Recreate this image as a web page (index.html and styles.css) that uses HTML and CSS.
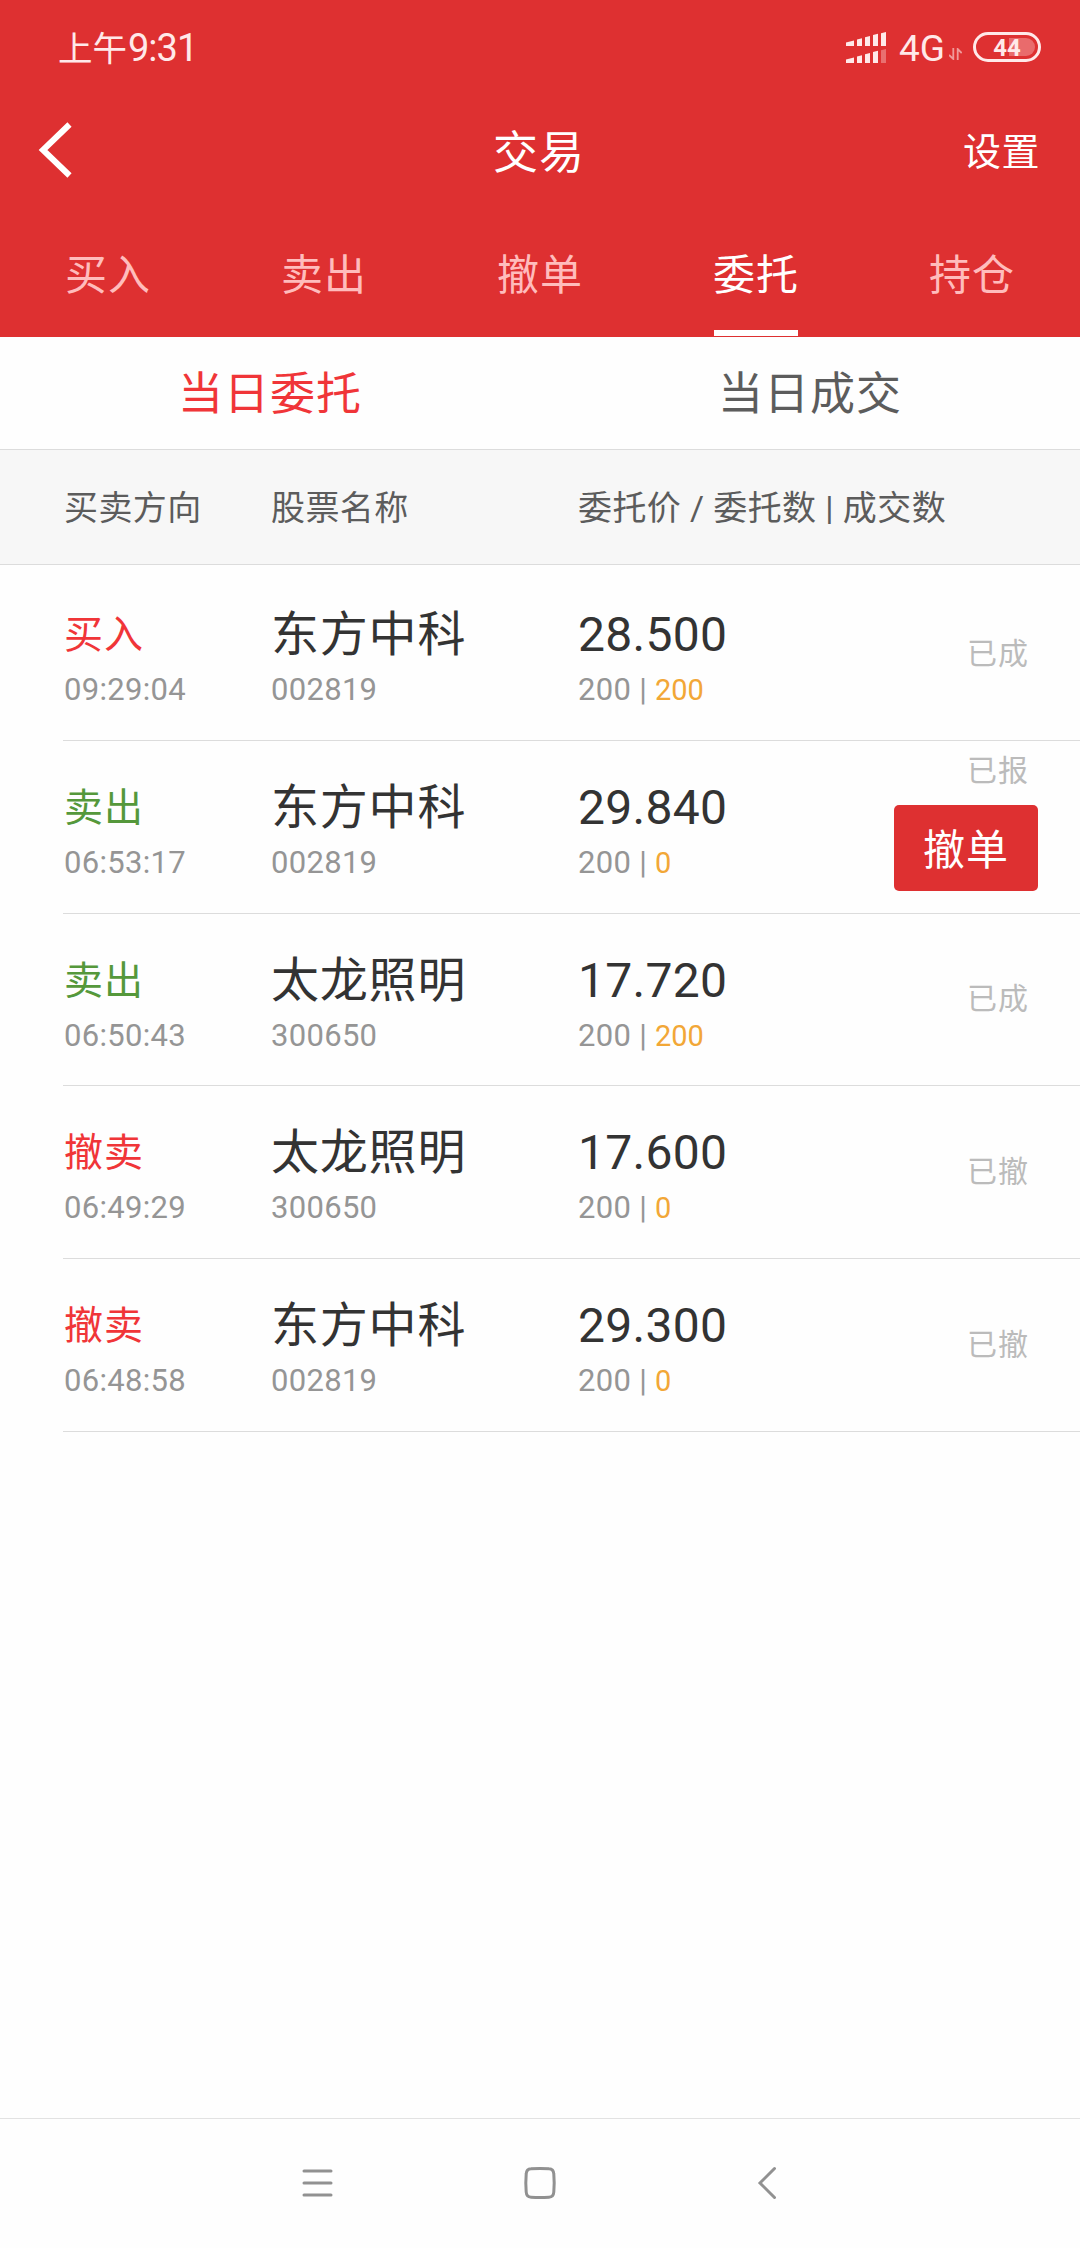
FILE: index.html
```html
<!DOCTYPE html>
<html lang="zh-CN">
<head>
    <meta charset="UTF-8">
    <meta name="viewport" content="width=device-width, initial-scale=1.0">
    <title>交易</title>
    <link rel="stylesheet" href="styles.css">
</head>
<body>
    <header class="header">
        <div class="status-bar">
            <div class="clock">上午<span class="clock-digits">9:31</span></div>
            <div class="status-icons">
                <svg class="signal" width="40" height="32" viewBox="0 0 40 32" fill="#ffe9e9">
                    <path d="M0 10.5l8-2V14H0zM11 7.5l5-1.3V14h-5zM19 5.2l5-1.3V14h-5zM27 3l5-1.3V14h-5zM35 1.2l5-1.2v14h-5z"/>
                    <path d="M0 27.5l8-2V31H0zM11 24.5l5-1.3V31h-5zM19 22.2l5-1.3V31h-5zM27 20l5-1.3V31h-5z"/>
                    <path d="M35 18.2l5-1.2v14h-5z" opacity="0.35"/>
                </svg>
                <span class="network">4G</span>
                <svg class="traffic" width="13" height="12" viewBox="0 0 13 12" fill="none" stroke="#f09a9a" stroke-width="1.8">
                    <path d="M4.3 0v11L0 7M8.7 12V1l4 4"/>
                </svg>
                <svg class="battery" width="68" height="30" viewBox="0 0 68 30">
                    <rect x="1.5" y="1.5" width="65" height="27" rx="13.5" fill="none" stroke="#ffe9e9" stroke-width="3"/>
                    <path d="M36 6h17a9 9 0 0 1 0 18H36z" fill="#e96b6c"/>
                    <text class="battery-level" x="34" y="24" text-anchor="middle">44</text>
                </svg>
            </div>
        </div>
        <div class="title-bar">
            <a class="back" href="#">
                <svg width="34" height="56" viewBox="0 0 34 56" fill="none" stroke="#fff" stroke-width="6">
                    <path d="M31.500 2.500L5 28l26.500 25.500"/>
                </svg>
            </a>
            <h1 class="title">交易</h1>
            <a class="settings" href="#">设置</a>
        </div>
        <nav class="tabs">
            <a class="tab" href="#"><span>买入</span></a>
            <a class="tab" href="#"><span>卖出</span></a>
            <a class="tab" href="#"><span>撤单</span></a>
            <a class="tab active" href="#"><span>委托</span></a>
            <a class="tab" href="#"><span>持仓</span></a>
        </nav>
    </header>

    <div class="sub-tabs">
        <a class="sub-tab active" href="#">当日委托</a>
        <a class="sub-tab" href="#">当日成交</a>
    </div>

    <div class="list-head">
        <span>买卖方向</span>
        <span>股票名称</span>
        <span>委托价 / 委托数 | 成交数</span>
    </div>

    <main class="orders">
        <div class="order">
            <div class="cell">
                <p class="side red">买入</p>
                <p class="sub">09:29:04</p>
            </div>
            <div class="cell">
                <p class="name">东方中科</p>
                <p class="sub">002819</p>
            </div>
            <div class="cell">
                <p class="price">28.500</p>
                <p class="sub">200 | <span class="filled">200</span></p>
            </div>
            <div class="state">已成</div>
        </div>
        <div class="order">
            <div class="cell">
                <p class="side green">卖出</p>
                <p class="sub">06:53:17</p>
            </div>
            <div class="cell">
                <p class="name">东方中科</p>
                <p class="sub">002819</p>
            </div>
            <div class="cell">
                <p class="price">29.840</p>
                <p class="sub">200 | <span class="filled">0</span></p>
            </div>
            <div class="state">已报<button class="cancel">撤单</button></div>
        </div>
        <div class="order">
            <div class="cell">
                <p class="side green">卖出</p>
                <p class="sub">06:50:43</p>
            </div>
            <div class="cell">
                <p class="name">太龙照明</p>
                <p class="sub">300650</p>
            </div>
            <div class="cell">
                <p class="price">17.720</p>
                <p class="sub">200 | <span class="filled">200</span></p>
            </div>
            <div class="state">已成</div>
        </div>
        <div class="order">
            <div class="cell">
                <p class="side red">撤卖</p>
                <p class="sub">06:49:29</p>
            </div>
            <div class="cell">
                <p class="name">太龙照明</p>
                <p class="sub">300650</p>
            </div>
            <div class="cell">
                <p class="price">17.600</p>
                <p class="sub">200 | <span class="filled">0</span></p>
            </div>
            <div class="state">已撤</div>
        </div>
        <div class="order">
            <div class="cell">
                <p class="side red">撤卖</p>
                <p class="sub">06:48:58</p>
            </div>
            <div class="cell">
                <p class="name">东方中科</p>
                <p class="sub">002819</p>
            </div>
            <div class="cell">
                <p class="price">29.300</p>
                <p class="sub">200 | <span class="filled">0</span></p>
            </div>
            <div class="state">已撤</div>
        </div>
    </main>

    <footer class="nav-bar">
        <svg width="32" height="34" viewBox="0 0 32 34">
            <path d="M2 5h27M2 17h27M2 29h27"/>
        </svg>
        <svg width="34" height="34" viewBox="0 0 34 34">
            <path d="M8 2.8Q17 2 26 2.8Q30.5 3 30.8 8Q31.6 17 30.8 26Q30.5 31 26 31.2Q17 32 8 31.2Q3.5 31 3.2 26Q2.400 17 3.2 8Q3.5 3 8 2.8z"/>
        </svg>
        <svg width="32" height="34" viewBox="0 0 32 34">
            <path d="M28.5 2.5L14 17l14.5 14.5"/>
        </svg>
    </footer>
</body>
</html>
```

FILE: styles.css
```css
* {
    box-sizing: border-box;
}
body {
    margin: 0;
    height: 2248px;
    display: flex;
    flex-direction: column;
    background-color: #fefefe;
    font-family: Roboto, "Noto Sans CJK SC", sans-serif;
    color: #333;
}
a {
    color: inherit;
    text-decoration: none;
}
p, h1 {
    margin: 0;
    font-weight: 400;
}

/* red header */
.header {
    height: 337px;
    background-color: #de3031;
    color: #fff;
}
.status-bar {
    height: 94px;
    padding: 0 39px 0 58px;
    display: flex;
    justify-content: space-between;
    align-items: center;
    color: #ffe9e9;
}
.clock {
    padding-top: 3px;
    font-size: 34.5px;
    line-height: 46px;
    white-space: nowrap;
}
.clock-digits {
    font-size: 38px;
    letter-spacing: -1px;
    margin-left: 1px;
}
.status-icons {
    display: flex;
    align-items: center;
}
.signal {
    margin-top: 1px;
}
.network {
    margin-left: 13px;
    padding-top: 3px;
    font-size: 37px;
    line-height: 46px;
}
.traffic {
    margin: 14px 11px 0 4px;
}
.battery-level {
    font-size: 24px;
    font-weight: 700;
    fill: #ffe9e9;
}
.title-bar {
    height: 112px;
    padding: 0 40px 0 38px;
    display: grid;
    grid-template-columns: 1fr auto 1fr;
    align-items: center;
}
.back svg {
    display: block;
}
.title {
    padding-top: 7px;
    font-size: 45px;
    letter-spacing: 1px;
    line-height: 60px;
}
.settings {
    justify-self: end;
    padding-top: 3px;
    font-size: 38px;
    letter-spacing: 0.5px;
    line-height: 60px;
}
.tabs {
    height: 130px;
    display: grid;
    grid-template-columns: repeat(5, 1fr);
    font-size: 42px;
    letter-spacing: 1px;
}
.tab {
    display: flex;
    justify-content: center;
    color: #ffbcbc;
}
.tab span {
    width: 84px;
    height: 130px;
    line-height: 140px;
    text-indent: -1px;
    white-space: nowrap;
    border-bottom: 6px solid transparent;
}
.tab.active {
    color: #fff;
}
.tab.active span {
    border-color: #fff;
}

.sub-tabs {
    height: 113px;
    display: grid;
    grid-template-columns: 1fr 1fr;
    border-bottom: 1px solid #dcdcdc;
    font-size: 45px;
    letter-spacing: 1px;
    line-height: 116px;
    text-align: center;
    color: #5c5c5c;
}
.sub-tab {
    height: 112px;
}
.sub-tab.active {
    color: #f03538;
}

/* order list */
.list-head, .order {
    display: grid;
    grid-template-columns: 207px 307px 1fr auto;
}
.list-head {
    height: 115px;
    padding-left: 64px;
    background-color: #f7f7f7;
    border-bottom: 1px solid #dcdcdc;
    font-size: 34px;
    letter-spacing: 0.4px;
    line-height: 116px;
    color: #5c5c5c;
}
.list-head span {
    height: 114px;
    white-space: nowrap;
}
.orders {
    flex: 1;
    padding: 3px 0 0 63px;
}
.order {
    height: 172.75px;
    padding-left: 1px;
    border-bottom: 1px solid #dcdcdc;
}
.cell {
    padding-top: 32px;
}
.side, .name, .price {
    height: 70px;
    line-height: 70px;
}
.side {
    font-size: 39px;
    letter-spacing: 1px;
}
.name {
    font-size: 48px;
    letter-spacing: 0.8px;
}
.price {
    font-size: 48px;
    letter-spacing: 0.3px;
}
.sub {
    font-size: 31px;
    letter-spacing: 0.3px;
    line-height: 40px;
    color: #959595;
}
.red {
    color: #f03538;
}
.green {
    color: #55983b;
}
.filled {
    font-size: 29px;
    letter-spacing: 0;
    color: #f2a737;
}
.state {
    padding-right: 51px;
    display: flex;
    flex-direction: column;
    align-items: flex-end;
    justify-content: center;
    font-size: 30px;
    letter-spacing: 1px;
    line-height: 36px;
    color: #bbb;
}
.cancel {
    width: 144px;
    height: 86px;
    margin: 16px -9px 9px 0;
    padding: 0 0 4px;
    border: none;
    border-radius: 5px;
    background-color: #de3031;
    color: #fff;
    font-family: inherit;
    font-size: 42px;
    letter-spacing: 1px;
}

/* system buttons */
.nav-bar {
    height: 130px;
    padding: 0 302px 2px;
    display: flex;
    justify-content: space-between;
    align-items: center;
    border-top: 1px solid #e2e2e2;
}
.nav-bar svg {
    fill: none;
    stroke: #919191;
    stroke-width: 3;
    stroke-linecap: round;
}
```
